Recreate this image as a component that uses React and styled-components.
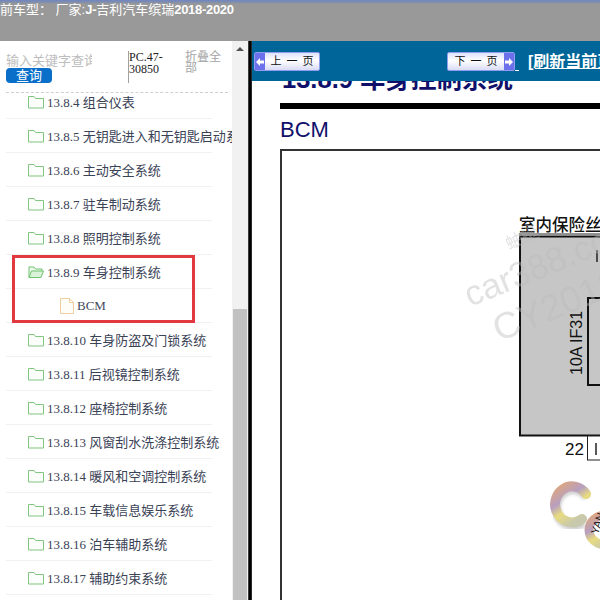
import React from "react";
import styled, { createGlobalStyle } from "styled-components";

const GlobalStyle = createGlobalStyle`
  html, body {
    margin: 0;
    padding: 0;
    width: 600px;
    height: 600px;
    overflow: hidden;
    background: #fff;
  }
  * { box-sizing: border-box; }
`;

const Page = styled.div`
  width: 600px;
  height: 600px;
  display: flex;
  flex-direction: column;
  overflow: hidden;
  font-family: "Liberation Serif", "Noto Sans CJK SC", serif;
`;

const Header = styled.header`
  height: 41px;
  flex: none;
  background: linear-gradient(#6f86c4 0, #7f8cab 2px, #999999 4px);
  color: #fff;
  font-family: "Liberation Sans", "Noto Sans CJK SC", sans-serif;
  font-size: 13px;
  font-weight: bold;
  letter-spacing: -0.3px;
  line-height: 14px;
  padding-top: 3px;
  white-space: nowrap;
  span { font-weight: normal; letter-spacing: 0; }
`;

const Body = styled.div`
  flex: 1;
  display: flex;
  min-height: 0;
`;

const Sidebar = styled.aside`
  width: 232px;
  flex: none;
  background: #fff;
  overflow: hidden;
`;

const SearchBar = styled.div`
  height: 52px;
  margin: 0 4px 0 6px;
  padding-top: 10px;
  border-bottom: 1px dashed #cfcfcf;
  display: flex;
  position: relative;
  z-index: 1;
  background: #fff;
`;

const SearchCol = styled.div`
  width: 122px;
  flex: none;
`;

const Keyword = styled.div`
  width: 86px;
  height: 17px;
  overflow: hidden;
  white-space: nowrap;
  color: #bdbdbd;
  font-family: "Liberation Sans", "Noto Sans CJK SC", sans-serif;
  font-size: 13px;
  line-height: 19px;
`;

const QueryButton = styled.div`
  width: 46px;
  height: 15px;
  background: #0a6fc9;
  border-radius: 4px;
  color: #fff;
  font-family: "Liberation Sans", "Noto Sans CJK SC", sans-serif;
  font-size: 13px;
  line-height: 15px;
  text-align: center;
`;

const CodeBox = styled.div`
  width: 57px;
  height: 32px;
  flex: none;
  border-left: 1px solid #a0a0a0;
  color: #222;
  font-size: 12px;
  line-height: 12px;
`;

const Collapse = styled.div`
  width: 38px;
  color: #a5a5a5;
  font-family: "Liberation Sans", "Noto Sans CJK SC", sans-serif;
  font-size: 12px;
  line-height: 11px;
  padding-top: 1px;
`;

const Tree = styled.ul`
  list-style: none;
  margin: -8px 0 0;
  padding: 0 0 0 6px;
  position: relative;
`;

const Row = styled.li`
  width: 206px;
  height: 34px;
  display: flex;
  align-items: center;
  padding-left: ${(p) => (p.$leaf ? "54px" : "22px")};
  gap: 3px;
  border-bottom: 1px solid #f1f1f1;
  color: ${(p) => (p.$leaf ? "#444a5c" : "#3a4256")};
  font-size: 13px;
  white-space: nowrap;
`;

const Highlight = styled.div`
  position: absolute;
  left: 12px;
  top: 170px;
  width: 183px;
  height: 68px;
  border: 3px solid #e2383f;
  pointer-events: none;
`;

const Scrollbar = styled.div`
  width: 16px;
  flex: none;
  background: #f1f1f1;
  display: flex;
  flex-direction: column;
  justify-content: space-between;
  align-items: center;
`;

const ScrollArrow = styled.div`
  margin-top: 6px;
  width: 0;
  height: 0;
  border-left: 4px solid transparent;
  border-right: 4px solid transparent;
  border-bottom: 4px solid #505050;
`;

const ScrollThumb = styled.div`
  width: 14px;
  height: 291px;
  background: #c1c1c1;
`;

const Divider = styled.div`
  width: 4px;
  flex: none;
  background: linear-gradient(90deg, #777 0, #000 25%, #000 75%, #555 100%);
`;

const Viewer = styled.main`
  flex: 1;
  min-width: 0;
  display: flex;
  flex-direction: column;
  overflow: hidden;
`;

const Toolbar = styled.div`
  height: 40px;
  flex: none;
  position: relative;
  z-index: 1;
  background: #006699;
  display: flex;
  align-items: flex-start;
  padding: 11px 0 0 2px;
  white-space: nowrap;
`;

const PageButton = styled.div`
  width: ${(p) => (p.$next ? "68px" : "66px")};
  height: 19px;
  margin-left: ${(p) => (p.$next ? "127px" : "0")};
  display: flex;
  flex-direction: ${(p) => (p.$next ? "row-reverse" : "row")};
  flex: none;
  border: 1px solid #8f9df0;
  border-radius: 2px;
  background: linear-gradient(#dfe3fb, #fff 45%, #d9dcf5);
  color: #111;
  font-family: "Liberation Sans", "Noto Sans CJK SC", sans-serif;
  font-size: 11px;
  line-height: 17px;
`;

const ArrowCap = styled.span`
  width: 10px;
  flex: none;
  background: #6c70ea;
  color: #fff;
  display: flex;
  align-items: center;
  justify-content: center;
`;

const PageLabel = styled.span`
  flex: 1;
  text-align: center;
  word-spacing: 2px;
`;

const LinkTail = styled.span`
  width: 4px;
  height: 19px;
  flex: none;
  border-bottom: 1px solid #fff;
`;

const Refresh = styled.a`
  margin: 0 0 0 9px;
  color: #fff;
  font-family: "Liberation Sans", "Noto Sans CJK SC", sans-serif;
  font-size: 16px;
  line-height: 19px;
  font-weight: bold;
  text-decoration: underline;
`;

const Doc = styled.div`
  flex: 1;
  min-height: 0;
  overflow: hidden;
  padding-left: 28px;
  background: #fff;
  color: #10106b;
  font-family: "Liberation Sans", "Noto Sans CJK SC", sans-serif;
  white-space: nowrap;
`;

const SectionTitle = styled.h2`
  margin: -17px 0 0 2px;
  height: 39px;
  font-size: 25.5px;
  line-height: 30px;
  font-weight: bold;
`;

const Rule = styled.div`
  width: 340px;
  height: 6px;
  background: #000;
`;

const SubTitle = styled.h3`
  margin: 8px 0 0;
  height: 25px;
  font-size: 22px;
  line-height: 25px;
  font-weight: normal;
`;

const Frame = styled.div`
  width: 340px;
  height: 500px;
  margin-top: 7px;
  border: 2px solid #333;
  background: #fff;
`;

const FolderIcon = ({ open }) => (
  <svg width="16" height="14" viewBox="0 0 16 14" fill="none" style={{ flex: "none" }}>
    {open ? (
      <>
        <path d="M1 12.5V2h5l1.5 2H14v2" stroke="#6fc46f" fill="#eef8ee" />
        <path d="M1 12.5 3.500 6H15.500L13 12.500Z" stroke="#6fc46f" fill="#d9f2d9" />
      </>
    ) : (
      <path d="M.5 13V1.500h5.500l1.500 2h8V13Z" stroke="#7fc67f" fill="#fbfefb" />
    )}
  </svg>
);

const FileIcon = () => (
  <svg width="14" height="16" viewBox="0 0 14 16" fill="none" style={{ flex: "none" }}>
    <path d="M.5.5h9l4 4v11H.5Z" stroke="#efcf9f" fill="#fffdf8" />
    <path d="M9.500.5v4h4" stroke="#efcf9f" />
  </svg>
);

// the wiring diagram inside the frame, coordinates are the page's own
const Diagram = () => (
  <svg width="336" height="496" viewBox="282 151 336 496" fill="none" style={{ display: "block" }}>
    <defs>
      <linearGradient id="ring" x1="0" y1="0" x2="0.6" y2="1">
        <stop offset="0" stopColor="#dfa67c" />
        <stop offset="0.4" stopColor="#b79fc0" />
        <stop offset="0.65" stopColor="#e8dc80" />
        <stop offset="1" stopColor="#c8c8ac" />
      </linearGradient>
      <filter id="soft"><feGaussianBlur stdDeviation="1.6" /></filter>
    </defs>
    <g fontFamily='"Liberation Sans", "Noto Sans CJK SC", sans-serif' fill="#111">
      <text x="519" y="231" fontSize="16.500" fontWeight="500">室内保险丝盒</text>
      <line x1="519" y1="234" x2="600" y2="234" stroke="#222" />
      <rect x="520" y="236.500" width="110" height="199" fill="#c6c6c6" stroke="#111" strokeWidth="2" />
      <line x1="597" y1="250" x2="597" y2="262" stroke="#222" strokeWidth="1.500" />
      <rect x="588" y="298" width="50" height="87" fill="#c6c6c6" stroke="#111" strokeWidth="2" />
      <text fontSize="16" transform="translate(582 375) rotate(-90)">10A IF31</text>
      <text x="565" y="455" fontSize="17">22</text>
      <rect x="587.500" y="436" width="40" height="24" fill="#fff" stroke="#222" />
      <line x1="596" y1="443" x2="596" y2="455" stroke="#222" strokeWidth="1.500" />
    </g>
    <g fontFamily='"Liberation Sans", "Noto Sans CJK SC", sans-serif' fill="#bcbcbc" opacity="0.42">
      <text fontSize="17" transform="translate(509 250) rotate(-24)">蚰蜒</text>
      <text fontSize="35" transform="translate(470 307) rotate(-22)">car388.com</text>
      <text fontSize="37" transform="translate(499 342) rotate(-22)">CY2018</text>
    </g>
    <path d="M586 494A17 18 0 1 0 582 519" stroke="#999" strokeWidth="10" opacity="0.45" filter="url(#soft)" transform="translate(1 3)" />
    <path d="M586 494A17 18 0 1 0 582 519" stroke="url(#ring)" strokeWidth="10" strokeLinecap="round" />
    <ellipse cx="606" cy="530" rx="17" ry="15" stroke="url(#ring)" strokeWidth="9" />
    <text fontSize="11" fill="#222" fontFamily='"Liberation Sans", sans-serif' transform="translate(598 535) rotate(-72)">YAN</text>
  </svg>
);

const items = [
  { no: "13.8.4", name: "组合仪表" },
  { no: "13.8.5", name: "无钥匙进入和无钥匙启动系统" },
  { no: "13.8.6", name: "主动安全系统" },
  { no: "13.8.7", name: "驻车制动系统" },
  { no: "13.8.8", name: "照明控制系统" },
  { no: "13.8.9", name: "车身控制系统", open: true },
  { leaf: true, name: "BCM" },
  { no: "13.8.10", name: "车身防盗及门锁系统" },
  { no: "13.8.11", name: "后视镜控制系统" },
  { no: "13.8.12", name: "座椅控制系统" },
  { no: "13.8.13", name: "风窗刮水洗涤控制系统" },
  { no: "13.8.14", name: "暖风和空调控制系统" },
  { no: "13.8.15", name: "车载信息娱乐系统" },
  { no: "13.8.16", name: "泊车辅助系统" },
  { no: "13.8.17", name: "辅助约束系统" },
];

export default function App() {
  return (
    <Page>
      <GlobalStyle />
      <Header>
        <span>前车型： 厂家:</span>J-<span>吉利汽车缤瑞</span>2018-2020
      </Header>
      <Body>
        <Sidebar>
          <SearchBar>
            <SearchCol>
              <Keyword>输入关键字查询</Keyword>
              <QueryButton>查询</QueryButton>
            </SearchCol>
            <CodeBox>PC.47-<br />30850</CodeBox>
            <Collapse>折叠全部</Collapse>
          </SearchBar>
          <Tree>
            {items.map((it) =>
              it.leaf ? (
                <Row key={it.name} $leaf>
                  <FileIcon />
                  {it.name}
                </Row>
              ) : (
                <Row key={it.no}>
                  <FolderIcon open={it.open} />
                  {it.no} {it.name}
                </Row>
              )
            )}
            <Highlight />
          </Tree>
        </Sidebar>
        <Scrollbar>
          <ScrollArrow />
          <ScrollThumb />
        </Scrollbar>
        <Divider />
        <Viewer>
          <Toolbar>
            <PageButton>
              <ArrowCap>
                <svg width="8" height="8" viewBox="0 0 8 8"><path d="M0 4 4 0V2.500H8V5.500H4V8Z" fill="#fff" /></svg>
              </ArrowCap>
              <PageLabel>上 一 页</PageLabel>
            </PageButton>
            <PageButton $next>
              <ArrowCap>
                <svg width="8" height="8" viewBox="0 0 8 8"><path d="M8 4 4 0V2.500H0V5.500H4V8Z" fill="#fff" /></svg>
              </ArrowCap>
              <PageLabel>下 一 页</PageLabel>
            </PageButton>
            <LinkTail />
            <Refresh>[刷新当前页]</Refresh>
          </Toolbar>
          <Doc>
            <SectionTitle>13.8.9 车身控制系统</SectionTitle>
            <Rule />
            <SubTitle>BCM</SubTitle>
            <Frame>
              <Diagram />
            </Frame>
          </Doc>
        </Viewer>
      </Body>
    </Page>
  );
}
